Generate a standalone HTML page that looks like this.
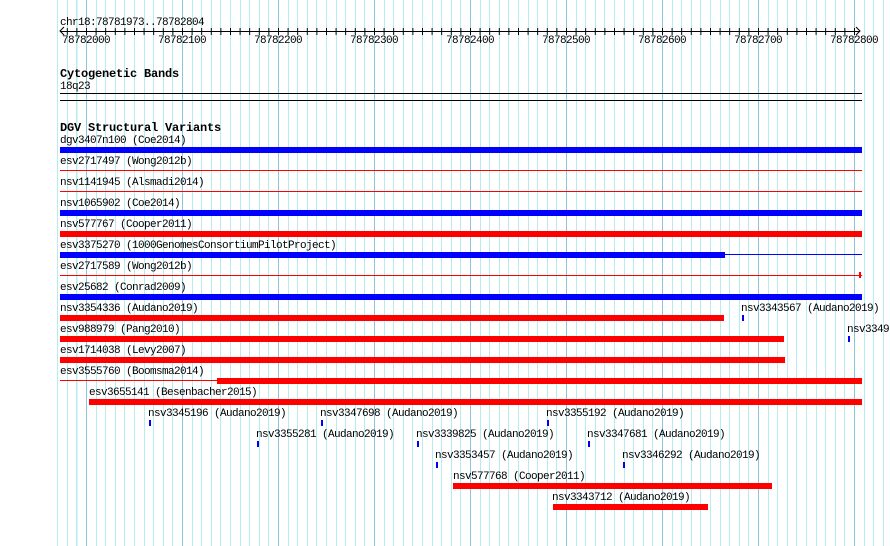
<!DOCTYPE html>
<html><head><meta charset="utf-8"><style>
html,body{margin:0;padding:0;background:#fff;width:890px;height:546px;overflow:hidden}
svg{display:block}
text{font-family:"Liberation Mono","DejaVu Sans Mono",monospace;font-size:11px;letter-spacing:-0.6px;fill:#000}
.b{font-weight:bold;font-size:12px;letter-spacing:-0.2px}
</style></head><body>
<svg width="890" height="546" viewBox="0 0 890 546" xmlns="http://www.w3.org/2000/svg" shape-rendering="crispEdges">
<defs>
<pattern id="g" patternUnits="userSpaceOnUse" x="86" y="0" width="96" height="546">
<rect x="0" y="0" width="1" height="546" fill="#88c4e4"/>
<rect x="10" y="0" width="1" height="546" fill="#b4ecf2"/>
<rect x="19" y="0" width="1" height="546" fill="#b4ecf2"/>
<rect x="29" y="0" width="1" height="546" fill="#b4ecf2"/>
<rect x="38" y="0" width="1" height="546" fill="#b4ecf2"/>
<rect x="48" y="0" width="1" height="546" fill="#b4ecf2"/>
<rect x="58" y="0" width="1" height="546" fill="#b4ecf2"/>
<rect x="67" y="0" width="1" height="546" fill="#b4ecf2"/>
<rect x="77" y="0" width="1" height="546" fill="#b4ecf2"/>
<rect x="86" y="0" width="1" height="546" fill="#b4ecf2"/>
</pattern>
<pattern id="t" patternUnits="userSpaceOnUse" x="86" y="0" width="9.6" height="546">
<rect x="0" y="28" width="1" height="7" fill="#000"/>
</pattern>
</defs>
<rect x="57" y="0" width="833" height="546" fill="url(#g)"/>
<rect x="76.4" y="0" width="1" height="546" fill="#b4ecf2"/>
<rect x="66.8" y="0" width="1" height="546" fill="#b4ecf2"/>

<text x="60" y="25">chr18:78781973..78782804</text>
<rect x="60" y="31" width="800" height="1" fill="#000"/>
<rect x="62" y="28" width="798" height="7" fill="url(#t)"/>
<path d="M64 27 L60 31 L64 35 M856 27 L860 31 L856 35" stroke="#000" fill="none" shape-rendering="auto"/>
<text x="62" y="43">78782000</text>
<text x="158" y="43">78782100</text>
<text x="254" y="43">78782200</text>
<text x="350" y="43">78782300</text>
<text x="446" y="43">78782400</text>
<text x="542" y="43">78782500</text>
<text x="638" y="43">78782600</text>
<text x="734" y="43">78782700</text>
<text x="830" y="43">78782800</text>

<text class="b" x="60" y="77" textLength="119">Cytogenetic Bands</text>
<text x="60" y="89">18q23</text>
<rect x="60" y="93" width="802" height="1" fill="#000"/>
<rect x="60" y="100" width="802" height="1" fill="#000"/>

<text class="b" x="60" y="131" textLength="161">DGV Structural Variants</text>

<text x="60" y="143">dgv3407n100 (Coe2014)</text>
<rect x="60" y="147" width="802" height="6" fill="#0000ff"/>

<text x="60" y="164">esv2717497 (Wong2012b)</text>
<rect x="60" y="170" width="802" height="1" fill="#ff0000"/>

<text x="60" y="185">nsv1141945 (Alsmadi2014)</text>
<rect x="60" y="191" width="802" height="1" fill="#ff0000"/>

<text x="60" y="206">nsv1065902 (Coe2014)</text>
<rect x="60" y="210" width="802" height="6" fill="#0000ff"/>

<text x="60" y="227">nsv577767 (Cooper2011)</text>
<rect x="60" y="231" width="802" height="6" fill="#ff0000"/>

<text x="60" y="248">esv3375270 (1000GenomesConsortiumPilotProject)</text>
<rect x="60" y="252" width="665" height="6" fill="#0000ff"/>
<rect x="725" y="254" width="137" height="1" fill="#0000ff"/>

<text x="60" y="269">esv2717589 (Wong2012b)</text>
<rect x="60" y="275" width="802" height="1" fill="#ff0000"/>
<rect x="859" y="272" width="2" height="6" fill="#ff0000"/>

<text x="60" y="290">esv25682 (Conrad2009)</text>
<rect x="60" y="294" width="802" height="6" fill="#0000ff"/>

<text x="60" y="311">nsv3354336 (Audano2019)</text>
<rect x="60" y="315" width="664" height="6" fill="#ff0000"/>
<text x="741" y="311">nsv3343567 (Audano2019)</text>
<rect x="742" y="315" width="2" height="6" fill="#0000ff"/>

<text x="60" y="332">esv988979 (Pang2010)</text>
<rect x="60" y="336" width="724" height="6" fill="#ff0000"/>
<text x="847" y="332">nsv3349</text>
<rect x="848" y="336" width="2" height="6" fill="#0000ff"/>

<text x="60" y="353">esv1714038 (Levy2007)</text>
<rect x="60" y="357" width="725" height="6" fill="#ff0000"/>

<text x="60" y="374">esv3555760 (Boomsma2014)</text>
<rect x="60" y="380" width="157" height="1" fill="#ff0000"/>
<rect x="217" y="378" width="645" height="6" fill="#ff0000"/>

<text x="89" y="395">esv3655141 (Besenbacher2015)</text>
<rect x="89" y="399" width="773" height="6" fill="#ff0000"/>

<text x="148" y="416">nsv3345196 (Audano2019)</text>
<rect x="149" y="420" width="2" height="6" fill="#0000ff"/>
<text x="320" y="416">nsv3347698 (Audano2019)</text>
<rect x="321" y="420" width="2" height="6" fill="#0000ff"/>
<text x="546" y="416">nsv3355192 (Audano2019)</text>
<rect x="547" y="420" width="2" height="6" fill="#0000ff"/>

<text x="256" y="437">nsv3355281 (Audano2019)</text>
<rect x="257" y="441" width="2" height="6" fill="#0000ff"/>
<text x="416" y="437">nsv3339825 (Audano2019)</text>
<rect x="417" y="441" width="2" height="6" fill="#0000ff"/>
<text x="587" y="437">nsv3347681 (Audano2019)</text>
<rect x="588" y="441" width="2" height="6" fill="#0000ff"/>

<text x="435" y="458">nsv3353457 (Audano2019)</text>
<rect x="436" y="462" width="2" height="6" fill="#0000ff"/>
<text x="622" y="458">nsv3346292 (Audano2019)</text>
<rect x="623" y="462" width="2" height="6" fill="#0000ff"/>

<text x="453" y="479">nsv577768 (Cooper2011)</text>
<rect x="453" y="483" width="319" height="6" fill="#ff0000"/>

<text x="552" y="500">nsv3343712 (Audano2019)</text>
<rect x="553" y="504" width="155" height="6" fill="#ff0000"/>
</svg>
</body></html>
